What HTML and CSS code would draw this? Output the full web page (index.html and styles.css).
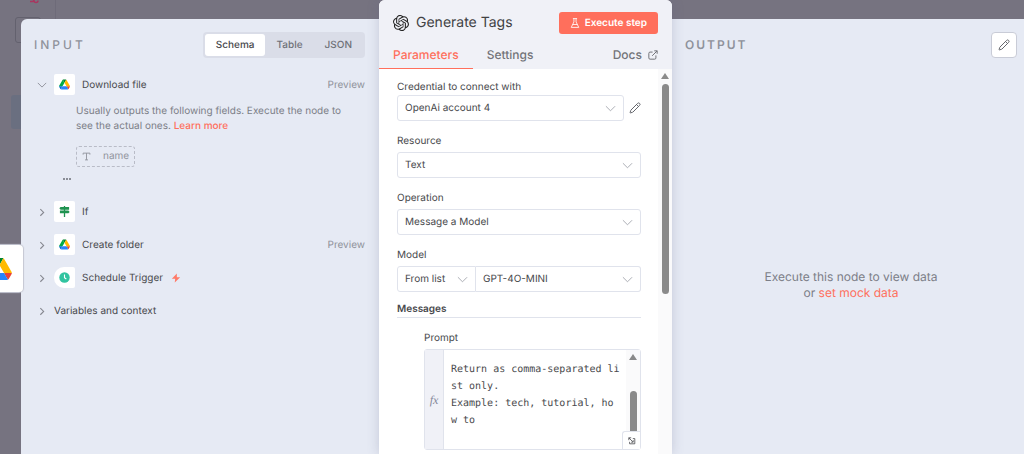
FILE: index.html
```html
<!DOCTYPE html>
<html lang="en">
<head>
  <meta charset="UTF-8">
  <meta name="viewport" content="width=device-width, initial-scale=1.0">
  <title>Generate Tags</title>
  <link rel="stylesheet" href="styles.css">
</head>
<body>

<!-- shared icons -->
<svg class="defs" aria-hidden="true">
  <symbol id="drive" viewBox="0 0 87.3 78">
    <path d="m6.6 66.85 3.85 6.65c.8 1.4 1.95 2.5 3.3 3.3l13.75-23.8h-27.5c0 1.55.4 3.1 1.2 4.5z" fill="#0066da"/>
    <path d="m43.65 25-13.75-23.8c-1.35.8-2.5 1.9-3.3 3.3l-25.4 44a9.06 9.06 0 0 0-1.2 4.5h27.5z" fill="#00ac47"/>
    <path d="m73.55 76.8c1.35-.8 2.5-1.9 3.3-3.3l1.6-2.75 7.65-13.25c.8-1.4 1.2-2.95 1.2-4.5h-27.5l5.85 11.5z" fill="#ea4335"/>
    <path d="m43.65 25 13.75-23.8c-1.35-.8-2.9-1.2-4.5-1.2h-18.5c-1.6 0-3.15.45-4.5 1.2z" fill="#00832d"/>
    <path d="m59.8 53h-32.3l-13.75 23.8c1.35.8 2.9 1.2 4.5 1.2h50.8c1.6 0 3.15-.45 4.5-1.2z" fill="#2684fc"/>
    <path d="m73.4 26.5-12.7-22c-.8-1.4-1.95-2.5-3.3-3.3l-13.75 23.8 16.15 28h27.45c0-1.55-.4-3.1-1.2-4.5z" fill="#ffba00"/>
  </symbol>
  <symbol id="down" viewBox="0 0 12 12"><path d="M1 3.5l5 5 5-5" fill="none" stroke="currentColor"/></symbol>
  <symbol id="right" viewBox="0 0 12 12"><path d="M4 2.5l4 4-4 4" fill="none" stroke="currentColor" stroke-width="1.3"/></symbol>
  <symbol id="pencil" viewBox="0 0 24 24">
    <path d="M21.2 6.8a2.8 2.8 0 0 0-4-4L4 16a2 2 0 0 0-.5.8L2.2 21.2a.5.5 0 0 0 .6.6l4.4-1.3a2 2 0 0 0 .8-.5zM15 5l4 4" fill="none" stroke="currentColor" stroke-width="2" stroke-linejoin="round"/>
  </symbol>
</svg>

<!-- canvas behind the panels -->
<div class="canvas" aria-hidden="true">
  <div class="sidebar-line"></div>
  <svg class="logo" viewBox="0 0 9 4"><path d="M0 1.5h3l2-3M4 .5a2 2 0 1 0 4 0" fill="none" stroke="#a8365f" stroke-width="1.5"/></svg>
  <div class="ghost"></div>
  <div class="ghost-blue"></div>
</div>
<div class="floating-node"><svg><use href="#drive"/></svg></div>

<main class="editor">
  <section class="panel input-panel">
    <div class="panel-head">
      <h2>INPUT</h2>
      <div class="switch">
        <button class="active">Schema</button>
        <button>Table</button>
        <button>JSON</button>
      </div>
    </div>

    <button class="node">
      <svg class="arrow"><use href="#down"/></svg>
      <span class="node-icon"><svg><use href="#drive"/></svg></span>
      <span>Download file</span>
      <span class="preview">Preview</span>
    </button>
    <div class="node-body">
      <p>Usually outputs the following fields. Execute the node to<br>see the actual ones. <a href="#">Learn more</a></p>
      <span class="chip">
        <svg viewBox="0 0 24 24"><path d="M3 7V3h18v4M8 21h8M12 3v18" fill="none" stroke="currentColor" stroke-width="2.5"/></svg>
        name
      </span>
    </div>
    <svg class="more" viewBox="0 0 8 2"><path d="M0 0h2v2H0zM3 0h2v2H3zM6 0h2v2H6z" fill="currentColor"/></svg>

    <div class="nodes">
      <button class="node">
        <svg class="arrow"><use href="#right"/></svg>
        <span class="node-icon">
          <svg viewBox="0 0 12 12"><path d="M5.3 0h1.4v1H11v3H1.7L.4 2.5 1.7 1h3.6zM5.3 4h1.4v1h3.6l1.3 1.5L10.3 8H6.7v4H5.3V8H1V5h4.3z" fill="#1f9350"/></svg>
        </span>
        <span>If</span>
      </button>
      <button class="node">
        <svg class="arrow"><use href="#right"/></svg>
        <span class="node-icon"><svg><use href="#drive"/></svg></span>
        <span>Create folder</span>
        <span class="preview">Preview</span>
      </button>
      <button class="node">
        <svg class="arrow"><use href="#right"/></svg>
        <span class="node-icon trigger">
          <svg viewBox="0 0 12 12"><circle cx="6" cy="6" r="5.7" fill="#31c4a0"/><path d="M6 2.7v3.5l2 1.500" fill="none" stroke="#fff" stroke-width="1.2"/></svg>
        </span>
        <span>Schedule Trigger</span>
        <svg class="bolt" viewBox="0 0 24 24"><path d="M14 1L2 14h8l-1 9 13-13h-8z" fill="currentColor"/></svg>
      </button>
      <button class="node">
        <svg class="arrow"><use href="#right"/></svg>
        <span>Variables and context</span>
      </button>
    </div>
  </section>

  <section class="modal">
    <div class="modal-head">
      <div class="title-row">
        <svg class="openai" viewBox="0 0 24 24"><path d="M22.2819 9.8211a5.9847 5.9847 0 0 0-.5157-4.9108 6.0462 6.0462 0 0 0-6.5098-2.9A6.0651 6.0651 0 0 0 4.9807 4.1818a5.9847 5.9847 0 0 0-3.9977 2.9 6.0462 6.0462 0 0 0 .7427 7.0966 5.98 5.98 0 0 0 .511 4.9107 6.051 6.051 0 0 0 6.5146 2.9001A5.9847 5.9847 0 0 0 13.2599 24a6.0557 6.0557 0 0 0 5.7718-4.2058 5.9894 5.9894 0 0 0 3.9977-2.9001 6.0557 6.0557 0 0 0-.7475-7.0729zm-9.022 12.6081a4.4755 4.4755 0 0 1-2.8764-1.0408l.1419-.0804 4.7783-2.7582a.7948.7948 0 0 0 .3927-.6813v-6.7369l2.02 1.1686a.071.071 0 0 1 .038.052v5.5826a4.504 4.504 0 0 1-4.4945 4.4944zm-9.6607-4.1254a4.4708 4.4708 0 0 1-.5346-3.0137l.142.0852 4.783 2.7582a.7712.7712 0 0 0 .7806 0l5.8428-3.3685v2.3324a.0804.0804 0 0 1-.0332.0615L9.74 19.9502a4.4992 4.4992 0 0 1-6.1408-1.6464zM2.3408 7.8956a4.485 4.485 0 0 1 2.3655-1.9728V11.6a.7664.7664 0 0 0 .3879.6765l5.8144 3.3543-2.0201 1.1685a.0757.0757 0 0 1-.071 0l-4.8303-2.7865A4.504 4.504 0 0 1 2.3408 7.872zm16.5963 3.8558L13.1038 8.364 15.1192 7.2a.0757.0757 0 0 1 .071 0l4.8303 2.7913a4.4944 4.4944 0 0 1-.6765 8.1042v-5.6772a.79.79 0 0 0-.407-.667zm2.0107-3.0231l-.142-.0852-4.7735-2.7818a.7759.7759 0 0 0-.7854 0L9.409 9.2297V6.8974a.0662.0662 0 0 1 .0284-.0615l4.8303-2.7866a4.4992 4.4992 0 0 1 6.6802 4.66zM8.3065 12.863l-2.02-1.1638a.0804.0804 0 0 1-.038-.0567V6.0742a4.4992 4.4992 0 0 1 7.3757-3.4537l-.142.0805L8.704 5.459a.7948.7948 0 0 0-.3927.6813zm1.0976-2.3654l2.602-1.4998 2.6069 1.4998v2.9994l-2.5974 1.4997-2.6067-1.4997Z" fill="#222"/></svg>
        <h1>Generate Tags</h1>
        <button class="execute">
          <svg viewBox="0 0 12 12"><path d="M3.5 .7h5M4.7 .7v4L1.5 11.3h9L7.3 4.7v-4M3.2 7.8h5.6" fill="none" stroke="currentColor" stroke-linejoin="round"/></svg>
          Execute step
        </button>
      </div>
      <nav class="tabs">
        <a href="#" class="active">Parameters</a>
        <a href="#">Settings</a>
        <a href="#" class="docs">Docs
          <svg viewBox="0 0 12 12"><path d="M7.5 1H11v3.5M11 1L5 7M5.5 2.5h-3A1.5 1.5 0 0 0 1 4v5.5A1.5 1.5 0 0 0 2.5 11H8a1.5 1.5 0 0 0 1.5-1.5v-3" fill="none" stroke="currentColor" stroke-width="1.2"/></svg>
        </a>
      </nav>
    </div>

    <div class="modal-body">
      <form class="fields">
        <div class="field tight">
          <label for="credential">Credential to connect with</label>
          <div class="row">
            <div class="select">
              <select id="credential"><option>OpenAi account 4</option></select>
              <svg><use href="#down"/></svg>
            </div>
            <button type="button" class="edit" aria-label="Edit credential"><svg><use href="#pencil"/></svg></button>
          </div>
        </div>
        <div class="field">
          <label for="resource">Resource</label>
          <div class="select">
            <select id="resource"><option>Text</option></select>
            <svg><use href="#down"/></svg>
          </div>
        </div>
        <div class="field">
          <label for="operation">Operation</label>
          <div class="select">
            <select id="operation"><option>Message a Model</option></select>
            <svg><use href="#down"/></svg>
          </div>
        </div>
        <div class="field">
          <label for="model">Model</label>
          <div class="joined">
            <div class="select">
              <select aria-label="Model source"><option>From list</option></select>
              <svg><use href="#down"/></svg>
            </div>
            <div class="select">
              <select id="model"><option>GPT-4O-MINI</option></select>
              <svg><use href="#down"/></svg>
            </div>
          </div>
        </div>
        <h3>Messages</h3>
        <div class="field prompt">
          <label for="prompt">Prompt</label>
          <div class="code">
            <span class="fx">fx</span>
            <textarea id="prompt" spellcheck="false">Return as comma-separated li
st only.
Example: tech, tutorial, ho
w to</textarea>
            <div class="bar code-bar"><i class="up"></i><i class="thumb"></i></div>
            <button type="button" class="expand" aria-label="Expand editor">
              <svg viewBox="0 0 10 10"><path d="M1 4V1h3M1 1l5 5M6.5 4v2.5H4M6 2h2.500v6.500H2V6" fill="none" stroke="currentColor"/></svg>
            </button>
          </div>
        </div>
      </form>
      <div class="bar"><i class="up"></i><i class="thumb"></i></div>
    </div>
  </section>

  <section class="panel output-panel">
    <div class="panel-head">
      <h2>OUTPUT</h2>
      <button class="pin" aria-label="Edit output"><svg><use href="#pencil"/></svg></button>
    </div>
    <p class="empty">Execute this node to view data<br>or <a href="#">set mock data</a></p>
  </section>
</main>
</body>
</html>
```
FILE: styles.css
```css
* { box-sizing: border-box; }
body { margin: 0; background: #767380; font-family: Inter, sans-serif; font-size: 10px; line-height: 16px; color: #48494c; overflow: hidden; text-rendering: geometricPrecision; }
h1, h2, h3, p { margin: 0; font-weight: 400; }
button, select, textarea { font: inherit; color: inherit; margin: 0; padding: 0; border: 0; background: none; text-rendering: inherit; }
button { cursor: pointer; }
a { color: #ff6f5c; text-decoration: none; }
svg { display: block; flex: none; }
.defs { position: absolute; width: 0; height: 0; }

/* canvas */
.canvas { position: absolute; inset: 0; }
.canvas > * { position: absolute; }
.sidebar-line { left: 55px; top: 0; width: 1px; height: 100%; background: #6e6b79; }
.logo { left: 30px; top: 0; width: 9px; height: 4px; }
.ghost { left: 15px; top: 17px; width: 26px; height: 26px; border: 1px solid #63616e; border-radius: 3px; }
.ghost-blue { left: 11px; top: 95px; width: 20px; height: 34px; background: #6a6f80; border-radius: 3px; }
.floating-node { position: absolute; z-index: 3; left: -24px; top: 245px; width: 47px; height: 47px; display: grid; place-items: center; background: #fff; border-radius: 4px; box-shadow: 0 0 1px 1px #c5c7d2; }
.floating-node svg { width: 25px; height: 22px; }

/* layout */
.editor { position: relative; min-height: 100vh; padding-left: 21px; display: grid; grid-template-columns: 358fr 293fr 352fr; }
.panel { margin-top: 19px; background: #e6eaf4; }
.panel-head { display: flex; align-items: center; justify-content: space-between; height: 26px; }
.panel-head h2 { font-size: 12px; font-weight: 500; letter-spacing: 3px; color: #8f929b; }

/* input */
.input-panel { padding: 13px 14px 0 13px; border-radius: 6px 0 0 0; }
.switch { display: flex; padding: 2px; background: #dadde8; border-radius: 4px; color: #6f7178; }
.switch button { height: 22px; padding: 0 11px; border-radius: 3px; font-weight: 500; }
.switch .active { background: #fff; color: #47484c; }
.node { display: flex; align-items: center; width: 100%; height: 21px; text-align: left; }
.input-panel > .node { margin-top: 16px; }
.arrow { width: 10px; height: 10px; margin: 0 7px 0 3px; color: #85878f; }
.node-icon { display: grid; place-items: center; width: 21px; height: 21px; margin-right: 7px; background: #fff; border-radius: 2px; }
.node-icon svg { width: 11px; height: 11px; }
.node-icon.trigger { border-radius: 10px 2px 2px 10px; }
.preview { margin-left: auto; color: #8f929b; }
.bolt { width: 10px; height: 10px; margin-left: 8px; color: #ff7a68; }
.node-body { margin: 9px 0 0 42px; color: #7c7e87; line-height: 15px; }
.node-body a { font-weight: 500; }
.chip { display: inline-flex; align-items: center; gap: 12px; height: 21px; margin-top: 12px; padding: 0 5px; border: 1px dashed #b9bcc7; border-radius: 3px; color: #92959e; }
.chip svg { width: 9px; height: 9px; }
.more { width: 8px; height: 2px; margin: 11px 0 0 29px; color: #8a8d96; }
.nodes { display: grid; gap: 12px; margin-top: 21px; }

/* modal */
.modal { position: relative; z-index: 2; display: flex; flex-direction: column; background: #fff; border-radius: 6px 6px 0 0; box-shadow: 0 0 12px rgba(90, 96, 130, .25); }
.modal-head { background: #f0f1f7; border-radius: 6px 6px 0 0; }
.title-row { display: flex; align-items: center; height: 40px; padding: 6px 14px 0; }
.openai { width: 16px; height: 16px; margin-right: 7px; }
h1 { font-size: 14px; color: #414244; }
.execute { display: flex; align-items: center; gap: 5px; height: 22px; margin-left: auto; padding: 0 11px; background: #ff6f5c; border-radius: 3px; color: #fff; font-weight: 600; }
.execute svg { width: 10px; height: 10px; }
.tabs { display: flex; font-size: 12px; font-weight: 500; }
.tabs a { height: 29px; padding: 0 14px; line-height: 29px; color: #737479; }
.tabs .active { color: #ff6f5c; border-bottom: 1px solid #ff6f5c; }
.tabs .docs { display: flex; align-items: center; gap: 6px; margin-left: auto; }
.docs svg { width: 10px; height: 10px; }
.modal-body { flex: 1; display: flex; }
.fields { flex: 1; min-width: 0; padding: 10px 17px 3px 18px; }
.field { margin-bottom: 12px; }
.field label { display: block; margin-bottom: 3px; }
.tight label { margin-bottom: 0; }
.row { display: flex; align-items: center; gap: 5px; }
.row .select { flex: 1; }
.edit, .pin { color: #65676d; }
.edit svg { width: 12px; height: 12px; }
.select { display: grid; align-items: center; height: 26px; border: 1px solid #e0e3ec; border-radius: 3px; }
.select select { grid-area: 1 / 1; width: 100%; height: 24px; padding: 0 26px 0 7px; appearance: none; outline: 0; }
.select svg { grid-area: 1 / 1; justify-self: end; width: 11px; height: 11px; margin-right: 7px; color: #a4a6ae; pointer-events: none; }
.joined { display: grid; grid-template-columns: 79fr 165fr; }
.joined .select:first-child { border-radius: 3px 0 0 3px; }
.joined .select:last-child { border-left: 0; border-radius: 0 3px 3px 0; }
h3 { margin-top: -3px; font-size: 10px; font-weight: 600; border-bottom: 1px solid #e0e3ec; }
.prompt { margin: 12px 0 0 27px; }
.code { position: relative; display: flex; height: 101px; border: 1px solid #e0e3ec; border-radius: 3px; }
.fx { display: grid; place-items: center; width: 19px; background: #f0f1f7; border-right: 1px solid #e0e3ec; font-family: "Liberation Serif", serif; font-style: italic; font-size: 12px; color: #85889a; }
.code textarea { flex: 1; min-width: 0; padding: 11px 0 0 7px; resize: none; outline: 0; overflow: hidden; white-space: pre; font-family: "DejaVu Sans Mono", monospace; font-size: 10px; line-height: 17px; }
.expand { position: absolute; right: 0; bottom: 0; width: 18px; height: 18px; display: grid; place-items: center; background: #fff; border: 1px solid #e0e3ec; border-width: 1px 0 0 1px; border-radius: 3px 0 0 0; }
.expand svg { width: 8px; height: 8px; }

/* scrollbars */
.bar { display: flex; flex-direction: column; align-items: center; width: 14px; padding-top: 4px; background: #fafafb; }
.up { border: 4px solid transparent; border-top: 0; border-bottom: 6px solid #8a8a8a; margin-bottom: 5px; }
.thumb { width: 7px; height: 55%; background: #8a8a8a; border-radius: 4px; }
.code-bar .up { margin-bottom: 31px; }

/* output */
.output-panel { display: flex; flex-direction: column; padding: 13px 7px 0 13px; }
.output-panel h2 { font-weight: 600; letter-spacing: 2px; }
.pin { display: grid; place-items: center; width: 26px; height: 26px; background: #fff; border: 1px solid #c9ccd7; border-radius: 4px; }
.pin svg { width: 12px; height: 12px; }
.empty { margin: auto; padding-top: 58px; text-align: center; font-size: 12px; color: #7c7e87; }
```
